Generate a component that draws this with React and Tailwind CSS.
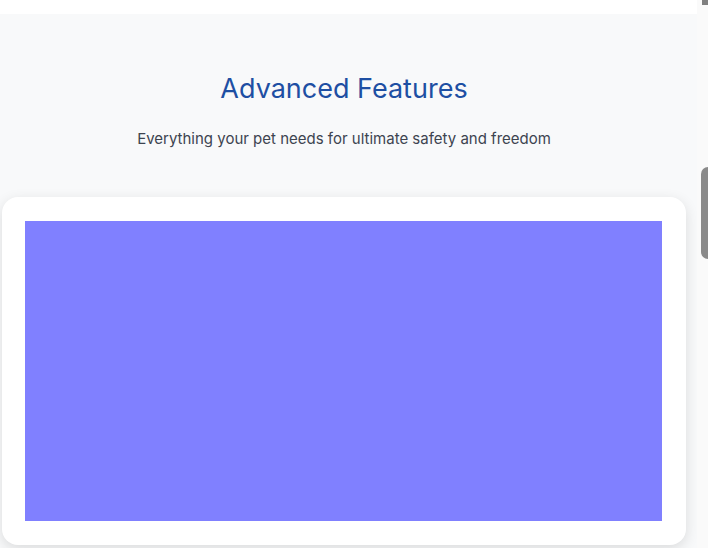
export default function App() {
  return (
    <div className="flex h-[548px] w-[708px] overflow-hidden bg-white" style={{ fontFamily: 'Inter, "Noto Sans", sans-serif' }}>
      <div className="flex w-[697px] flex-col">
        <div className="h-[14px] bg-white"></div>
        <section className="flex-1 bg-[#f8f9fa]">
          <div className="w-[688px] pt-[57px] text-center">
            <h2 className="text-[27px] leading-[36px] font-normal text-[#1e4fa3]">Advanced Features</h2>
            <p className="mt-[22px] text-[15px] leading-[20px] text-[#3d4450]">
              Everything your pet needs for ultimate safety and freedom
            </p>
          </div>
          <div className="mt-[48px] ml-[2px] w-[684px] rounded-2xl bg-white pt-[24px] pb-[24px] pl-[23px] pr-[24px] shadow-[0_4px_14px_rgba(0,0,0,0.12)]">
            <div className="h-[300px] bg-[#8080ff]"></div>
          </div>
        </section>
      </div>
      <div className="flex w-[11px] flex-col bg-[#fafafa]">
        <div className="ml-[5px] h-[5px] w-[6px] bg-[#808080]"></div>
        <div className="ml-[4px] mt-[162px] h-[92px] w-[7px] rounded-l-full bg-[#8a8a8a]"></div>
      </div>
    </div>
  );
}
